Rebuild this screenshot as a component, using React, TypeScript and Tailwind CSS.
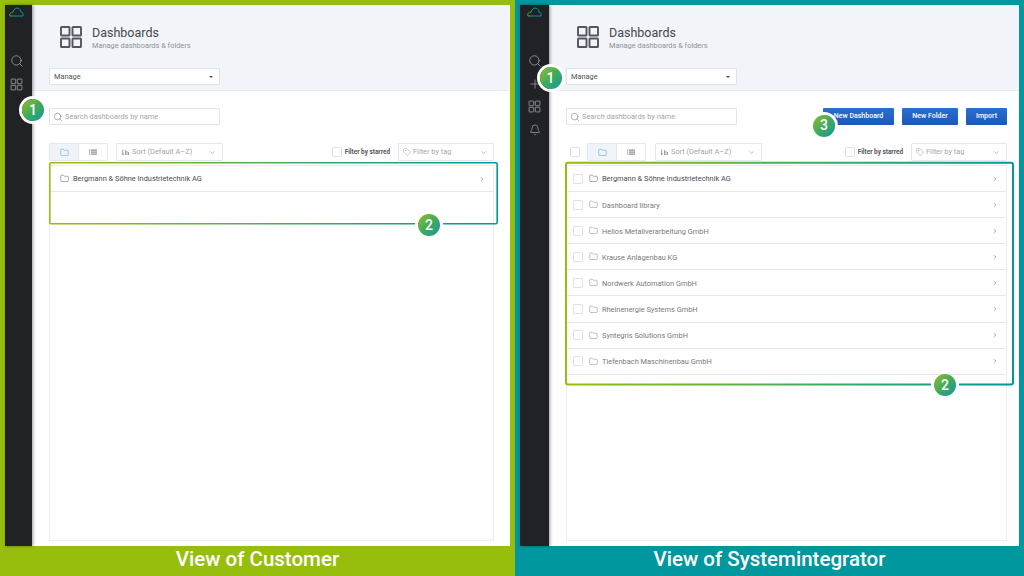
import React from "react";
import { Search, Plus, Bell, Folder, Tag, ChevronRight, ChevronDown } from "lucide-react";

function GridIcon({ size, stroke, sw }: { size: number; stroke: string; sw: number }) {
  return (
    <svg width={size} height={size} viewBox="0 0 24 24" fill="none" stroke={stroke} strokeWidth={sw}>
      <rect x="2" y="2" width="8.5" height="8.5" rx="0.6" />
      <rect x="13.5" y="2" width="8.5" height="8.5" rx="0.6" />
      <rect x="2" y="13.5" width="8.5" height="8.5" rx="0.6" />
      <rect x="13.5" y="13.5" width="8.5" height="8.5" rx="0.6" />
    </svg>
  );
}

function Cloud() {
  return (
    <svg width="15" height="10" viewBox="0 0 15 10" fill="none" strokeWidth="1">
      <defs>
        <linearGradient id="cl" x1="0" x2="1" y1="0" y2="0">
          <stop offset="0" stopColor="#5aa83c" />
          <stop offset="0.5" stopColor="#00979f" />
        </linearGradient>
      </defs>
      <path d="M1 9 C0 6.5 2 5 4 5.3 C4.6 2 7 0.8 9 1.2 C11 1.6 11.8 3.4 11.8 4.8 C13.6 5 14.6 6.8 14 9 Z" stroke="url(#cl)" />
    </svg>
  );
}

function Box({ cls }: { cls: string }) {
  return <span className={"block h-[10px] w-[10px] shrink-0 rounded-[1px] border border-[#dfe2e8] bg-white " + cls} />;
}

function ListGlyph() {
  return (
    <svg width="8" height="6" viewBox="0 0 8 6" fill="#8a8d93">
      <rect x="0" y="0.5" width="1.2" height="1.2" />
      <rect x="0" y="2.5" width="1.2" height="1.2" />
      <rect x="0" y="4.5" width="1.2" height="1.2" />
      <rect x="2" y="0.5" width="6" height="1.2" />
      <rect x="2" y="2.5" width="6" height="1.2" />
      <rect x="2" y="4.5" width="6" height="1.2" />
    </svg>
  );
}

function SortGlyph() {
  return (
    <svg width="8" height="7" viewBox="0 0 8 7" fill="#9ca0a8">
      <path d="M1.2 0.5h1v4h1L1.7 6.5 0.2 4.5h1z" />
      <rect x="4" y="1" width="1" height="5" />
      <rect x="5.5" y="2" width="1" height="4" />
      <rect x="7" y="3" width="1" height="3" />
    </svg>
  );
}

function Btn({ label, w }: { label: string; w: string }) {
  return (
    <span className={"flex h-[17px] items-center justify-center rounded-[1px] bg-gradient-to-b from-[#2a6fd2] to-[#1b58b8] text-[7px] font-medium text-white " + w}>
      {label}
    </span>
  );
}

function Row({ name, box, dark }: { name: string; box: boolean; dark?: boolean }) {
  return (
    <div className="flex h-[26.1px] shrink-0 items-center border-b border-[#e4e7ec]">
      {box && <Box cls="ml-[6px] mr-[6px]" />}
      <Folder size={9} strokeWidth={1.3} className={(box ? "" : "ml-[10px] ") + "shrink-0"} color={dark ? "#555860" : "#7f838a"} />
      <span className={"ml-[4px] pt-[1px] text-[7.4px] " + (dark ? "text-[#4a4d54]" : "text-[#777b82]")}>{name}</span>
      <ChevronRight size={6} strokeWidth={2.5} color="#6f7278" className="ml-auto mr-[8px]" />
    </div>
  );
}

function Panel({
  outer, width, sideW, pr, admin, rows,
}: {
  outer: string; width: string; sideW: string; pr: string; admin: boolean; rows: string[];
}) {
  return (
    <div className={"flex h-full flex-col " + outer + " " + width}>
      <div className="flex min-h-0 flex-1 px-[5px] pt-[5px]">
        <aside className={"relative z-10 flex shrink-0 flex-col items-center bg-[#212226] shadow-[1px_0_3px_rgba(0,0,0,0.4)] " + sideW + (admin ? "" : " pr-[4px]")}>
          <div className="mt-[2px] h-[10px]"><Cloud /></div>
          <Search size={14} strokeWidth={1.3} color="#a6a8ac" className="mt-[37px]" />
          {admin && <Plus size={14} strokeWidth={1.2} color="#a6a8ac" className="mt-[9px]" />}
          <div className={admin ? "mt-[9px]" : "mt-[10px]"}><GridIcon size={13} stroke="#a6a8ac" sw={1.4} /></div>
          {admin && <Bell size={12} strokeWidth={1.4} color="#a6a8ac" className="mt-[11px]" />}
        </aside>
        <main className="flex min-w-0 flex-1 flex-col bg-white">
          <header className="h-[86px] shrink-0 border-b border-[#e9ebf0] bg-[#f1f4f9] pl-[17px]">
            <div className="flex items-start pl-[10px] pt-[20px]">
              <GridIcon size={24} stroke="#53565c" sw={1.9} />
              <div className="ml-[9px] mt-[1px]">
                <div className="text-[12.5px] leading-[14px] text-[#44474d]">Dashboards</div>
                <div className="mt-[1px] text-[7.4px] leading-[9px] text-[#8f9298]">Manage dashboards &amp; folders</div>
              </div>
            </div>
            <div className="mt-[18px] flex h-[17px] w-[171px] items-center justify-between rounded-[1px] border border-[#dfe3ea] bg-white pl-[4px] pr-[6px] text-[7.4px] text-[#4f5258]">
              Manage
              <span className="h-0 w-0 border-x-[2px] border-t-[2.5px] border-x-transparent border-t-[#44474d]" />
            </div>
          </header>
          <div className={"flex min-h-0 flex-1 flex-col pl-[17px] " + pr}>
            <div className="mt-[17px] flex h-[17px] items-center">
              <div className="flex h-[17px] w-[171px] items-center rounded-[1px] border border-[#e2e5eb] pl-[3px] text-[7.4px] text-[#a3a6ad]">
                <Search size={10} strokeWidth={1.4} color="#7b7f86" className="mr-[2px]" />
                Search dashboards by name
              </div>
              {admin && (
                <div className="ml-auto flex gap-[8px]">
                  <Btn label="New Dashboard" w="w-[71px]" />
                  <Btn label="New Folder" w="w-[56px]" />
                  <Btn label="Import" w="w-[41px]" />
                </div>
              )}
            </div>
            <div className="mt-[18px] flex h-[18px] shrink-0 items-center">
              {admin && <Box cls="ml-[4px] mr-[7px]" />}
              <div className="flex h-[18px] w-[59px] overflow-hidden rounded-[1px] border border-[#e4e7ec]">
                <span className="flex w-[29px] items-center justify-center border-r border-[#e4e7ec] bg-[#f0f3f8]">
                  <Folder size={9} strokeWidth={1.5} color="#52a8e0" />
                </span>
                <span className="flex flex-1 items-center justify-center"><ListGlyph /></span>
              </div>
              <div className={(admin ? "ml-[9px]" : "ml-[8px]") + " flex h-[18px] w-[107px] items-center rounded-[1px] border border-[#e4e7ec] pl-[4px] pr-[6px] text-[7.4px] text-[#a3a6ad]"}>
                <SortGlyph />
                <span className="ml-[3px]">Sort (Default A–Z)</span>
                <ChevronDown size={7} strokeWidth={2} color="#8a8d93" className="ml-auto" />
              </div>
              <Box cls="ml-auto mr-[3px]" />
              <span className="pt-[2px] text-[6.4px] font-bold text-[#55585e]">Filter by starred</span>
              <div className="ml-[8px] flex h-[18px] w-[96px] items-center rounded-[1px] border border-[#e4e7ec] pl-[4px] pr-[6px] text-[7.4px] text-[#a3a6ad]">
                <Tag size={8} strokeWidth={1.4} color="#8a8d93" className="mr-[2px]" />
                Filter by tag
                <ChevronDown size={7} strokeWidth={2} color="#8a8d93" className="ml-auto" />
              </div>
            </div>
            <div className="mb-[5px] mt-[4px] flex min-h-0 flex-1 flex-col border border-[#eceef2]">
              {rows.map((r, i) => (
                <Row key={r} name={r} box={admin} dark={i === 0} />
              ))}
            </div>
          </div>
        </main>
      </div>
      <div className="flex h-[30px] shrink-0 items-center justify-center pb-[4px] text-[20.5px] font-medium text-white">
        {admin ? "View of Systemintegrator" : "View of Customer"}
      </div>
    </div>
  );
}

function Badge({ n, cx, cy, ring }: { n: number; cx: number; cy: number; ring: boolean }) {
  return (
    <span
      className={"absolute z-20 flex h-[22px] w-[22px] -translate-x-1/2 -translate-y-1/2 items-center justify-center rounded-full bg-gradient-to-br from-[#8fbc14] via-[#3fab5a] to-[#00979f] text-[14px] font-medium text-white " + (ring ? "shadow-[0_0_0_3px_white]" : "")}
      style={{ left: cx, top: cy }}
    >
      {n}
    </span>
  );
}

const customerRows = ["Bergmann & Söhne Industrietechnik AG"];
const adminRows = [
  "Bergmann & Söhne Industrietechnik AG",
  "Dashboard library",
  "Helios Metallverarbeitung GmbH",
  "Krause Anlagenbau KG",
  "Nordwerk Automation GmbH",
  "Rheinenergie Systems GmbH",
  "Syntegris Solutions GmbH",
  "Tiefenbach Maschinenbau GmbH",
];

export default function App() {
  return (
    <div className="relative flex h-[576px] w-[1024px] overflow-hidden" style={{ fontFamily: "Roboto, 'Liberation Sans', sans-serif" }}>
      <Panel outer="bg-[#97be0d]" width="w-[515px]" sideW="w-[27px]" pr="pr-[16px]" admin={false} rows={customerRows} />
      <Panel outer="bg-[#00979f]" width="w-[509px]" sideW="w-[29px]" pr="pr-[12px]" admin={true} rows={adminRows} />
      <svg className="pointer-events-none absolute left-0 top-0 z-20" width="1024" height="576" fill="none">
        <defs>
          <linearGradient id="f1" gradientUnits="userSpaceOnUse" x1="50" y1="0" x2="497" y2="0">
            <stop offset="0" stopColor="#97be0d" />
            <stop offset="0.5" stopColor="#4bae54" />
            <stop offset="1" stopColor="#00979f" />
          </linearGradient>
          <linearGradient id="f2" gradientUnits="userSpaceOnUse" x1="566" y1="0" x2="1013" y2="0">
            <stop offset="0" stopColor="#97be0d" />
            <stop offset="0.5" stopColor="#4bae54" />
            <stop offset="1" stopColor="#00979f" />
          </linearGradient>
        </defs>
        <path d="M415 223.7H51a1.2 1.2 0 0 1-1.2-1.2V164a1.2 1.2 0 0 1 1.2-1.2H496a1.2 1.2 0 0 1 1.2 1.2V222.5a1.2 1.2 0 0 1-1.2 1.2H443" stroke="url(#f1)" strokeWidth="1.6" />
        <path d="M931 384.6H568a2 2 0 0 1-2-2V164.8a2 2 0 0 1 2-2H1011a2 2 0 0 1 2 2V382.6a2 2 0 0 1-2 2H959" stroke="url(#f2)" strokeWidth="2" />
      </svg>
      <Badge n={1} cx={33} cy={110} ring />
      <Badge n={2} cx={429} cy={225} ring={false} />
      <Badge n={1} cx={550.5} cy={78} ring />
      <Badge n={2} cx={945} cy={385} ring={false} />
      <Badge n={3} cx={824} cy={125.5} ring />
    </div>
  );
}
